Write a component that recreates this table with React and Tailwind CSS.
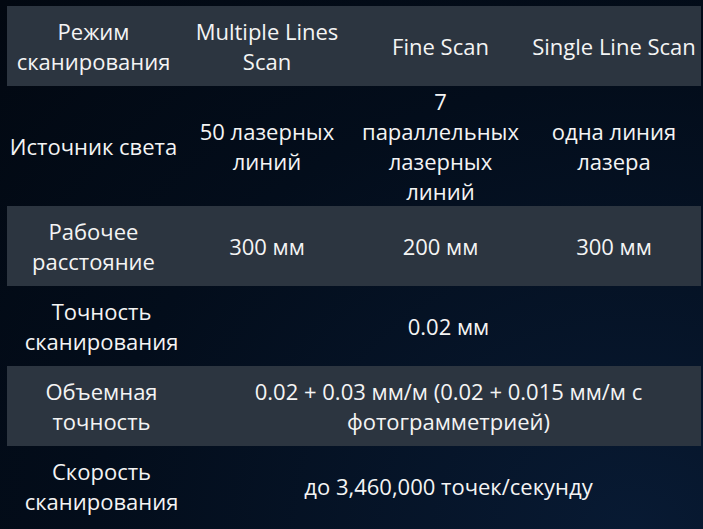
import React from 'react';

const rows = [
  { label: 'Рабочее расстояние', cells: ['300 мм', '200 мм', '300 мм'] },
  { label: 'Точность сканирования', span: '0.02 мм' },
  { label: 'Объемная точность', span: '0.02 + 0.03 мм/м (0.02 + 0.015 мм/м с фотограмметрией)' },
  { label: 'Скорость сканирования', span: 'до 3,460,000 точек/секунду' },
];

const App = () => {
  return (
    <div className="min-h-[529px] w-full bg-[radial-gradient(ellipse_at_90%_100%,#081a33_0%,#030d1b_60%,#020811_100%)] pt-[6px] pl-[7px] pr-[2px] font-['Open_Sans',sans-serif] text-[22px] leading-[30px] text-[#f4f4f4]">
      <table className="w-[694px] table-fixed border-collapse text-center">
        <colgroup>
          <col className="w-[173px]" />
          <col className="w-[174px]" />
          <col className="w-[173px]" />
          <col className="w-[174px]" />
        </colgroup>
        <tbody>
          {/* Header */}
          <tr className="h-[80px] bg-[#2c3540]">
            <td>Режим сканирования</td>
            <td>Multiple Lines Scan</td>
            <td>Fine Scan</td>
            <td>Single Line Scan</td>
          </tr>
          <tr className="h-[80px]">
            <td>Источник света</td>
            <td>50 лазерных линий</td>
            <td>7 параллельных лазерных линий</td>
            <td>одна линия лазера</td>
          </tr>
          {rows.map((row, idx) => (
            <tr key={idx} className={`h-[80px] ${idx % 2 === 0 ? 'bg-[#2c3540]' : ''}`}>
              {row.span ? (
                <>
                  <td className="pl-[16px]">{row.label}</td>
                  <td colSpan="3" className="pl-[16px]">{row.span}</td>
                </>
              ) : (
                <>
                  <td>{row.label}</td>
                  {row.cells.map((c, i) => <td key={i}>{c}</td>)}
                </>
              )}
            </tr>
          ))}
        </tbody>
      </table>
    </div>
  );
};

export default App;
